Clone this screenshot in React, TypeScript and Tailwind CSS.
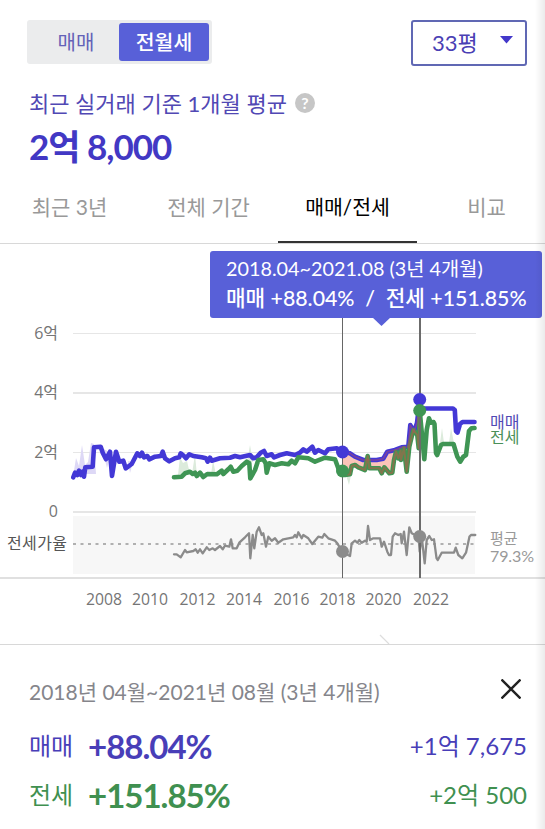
import clsx from "clsx";

type Point = [number, number];

const tabs = [
  { label: "최근 3년" },
  { label: "전체 기간" },
  { label: "매매/전세", active: true },
  { label: "비교" },
];

const gridLines = [
  { y: 333.5, label: "6억", thickness: 1 },
  { y: 393, label: "4억", thickness: 2 },
  { y: 452.5, label: "2억", thickness: 1 },
  { y: 512, label: "0", thickness: 2 },
];

const years = [
  { x: 104, label: "2008" },
  { x: 150, label: "2010" },
  { x: 197.5, label: "2012" },
  { x: 244, label: "2014" },
  { x: 291.5, label: "2016" },
  { x: 337.5, label: "2018" },
  { x: 383.5, label: "2020" },
  { x: 431, label: "2022" },
];

const saleBefore: Point[] = [
  [73.3, 477.3], [75, 472.7], [77.3, 475], [79, 470.7], [81, 475],
  [82.7, 471.7], [84, 476.7], [85.3, 467.3], [92.7, 466.7], [94, 447.3],
  [100.7, 446.7], [102.7, 452.7], [106, 459.3], [110, 451.7], [112, 476],
  [116, 451.7], [119.3, 461.7], [123.3, 460.7], [125.7, 468.3], [131.7, 464],
  [137.3, 453.3], [140, 456], [142, 452.7], [144, 457.3], [147.3, 456],
  [149.3, 459.3], [155, 456.7], [161, 456], [162.7, 451.7], [165, 458.3],
  [169.3, 461.3], [175, 458.3], [179.3, 457.3], [180.7, 453.3], [184, 456],
  [186, 458.3], [189.3, 454.3], [193.3, 456], [201.7, 457.3], [206, 458.3],
  [207.7, 461.7], [210, 457.7], [211.7, 460.7], [220, 458.3], [230, 457.7],
  [235, 456], [240, 457.3], [250, 455], [253.3, 458.3], [256.7, 457.3],
  [260.7, 452.7], [264, 451], [266.7, 456], [271.7, 454.3], [274, 457.3],
  [280, 455], [286.7, 453.3], [295, 455], [300, 452.7], [303.3, 449.3],
  [306.7, 451.7], [312.3, 446.7], [315, 452.7], [318.3, 450], [325, 453.3],
  [328.3, 449.3], [336.7, 448.3],
];

const saleRange: Point[] = [
  [342.5, 452], [350, 453.3], [355, 456.7], [363.3, 460], [376.7, 460],
  [383.3, 458.7], [387.3, 451.7], [395, 450], [401.7, 447.3], [408.3, 446.7],
  [410.3, 425], [414, 431.7], [417, 423], [419.7, 400],
];

const saleAfter: Point[] = [
  [420.7, 408.5], [453, 408.5], [454.8, 410], [456, 431], [457.5, 432.5],
  [460, 424], [462.5, 422], [474.5, 422],
];

const rentBefore: Point[] = [
  [174, 477.3], [181.7, 476.7], [185, 473.3], [190, 471.7], [192.7, 474],
  [195, 472.7], [196.7, 476], [200, 472.7], [203.3, 477], [207.3, 474],
  [216.7, 474.3], [221.7, 470.7], [223.3, 474], [228.3, 469.3], [230.7, 466.7],
  [233.3, 471.7], [237.3, 470.7], [241.7, 466], [246.7, 461.7], [249.3, 463.3],
  [250.3, 478.5], [255, 470], [258.3, 460], [263.3, 459.3], [265.7, 463.3],
  [266.7, 472.7], [269.3, 463.3], [275, 465], [281.7, 463.3], [288.3, 464.3],
  [291.7, 460.7], [295, 463.3], [298.3, 457.3], [308.3, 458.3], [315, 461.7],
  [325, 457.7], [335, 459.3], [338.3, 468.3],
];

const rentRange: Point[] = [
  [342.5, 470.7], [345, 475], [350, 474.3], [351.7, 466], [355, 465],
  [358.3, 467.3], [365, 470], [367.7, 456], [369.3, 468.3], [379.3, 468.3],
  [381.7, 473.3], [384.3, 467.3], [389.3, 473.3], [392.3, 472.7], [394, 460],
  [396, 451.7], [398.3, 458.3], [400.7, 450.7], [401, 460], [404, 448.3],
  [406.7, 471.7], [409.3, 446.7], [413.3, 430], [417.3, 435], [418.7, 448.3],
  [419.7, 410.7],
];

const rentAfter: Point[] = [
  [424.3, 459.3], [426.7, 430], [429, 418.3], [430.7, 422.7], [433.5, 422],
  [434.5, 424], [436, 453], [437.2, 455], [441, 445], [443, 444],
  [453.5, 444], [457.3, 456.7], [460.2, 461.7], [463.3, 456.7], [466, 455],
  [469, 431], [471.5, 428.3], [474.5, 428],
];

const ratio: Point[] = [
  [174, 554.3], [176.7, 554.3], [180.7, 557.3], [185, 550], [186.7, 552.3],
  [193.3, 551], [195.7, 549.3], [197.7, 552.7], [200, 549.3], [202.7, 553.3],
  [206.7, 547.3], [209.3, 550], [212.7, 548.3], [215, 550], [220, 546],
  [222.7, 549.3], [225, 545.7], [229.3, 546.7], [231, 539.3], [232.7, 548.3],
  [236.7, 548.3], [239.3, 542.7], [245, 537.3], [249, 533.3], [250.3, 558.3],
  [252.7, 535], [254.3, 548.3], [256.7, 531.7], [259, 527.3], [261.7, 535],
  [263.3, 533.3], [266, 546.7], [268.3, 536.7], [271.7, 540.7], [275, 538.3],
  [278.3, 542.7], [283.3, 539.3], [293.3, 537.3], [295, 535], [296.7, 537.3],
  [298.3, 532.3], [301.7, 538.3], [303.3, 535], [308.3, 538.3], [312.3, 544],
  [318.3, 536.7], [322.3, 537.7], [324.3, 534], [328.3, 538.3], [335, 540.7],
  [337.3, 543.3], [342.3, 551.7], [348, 555], [350, 556], [351.7, 543.3],
  [355, 540.7], [357.3, 542.7], [359.3, 540], [361.7, 542.7], [365, 540.7],
  [366.7, 541.7], [368, 526], [370, 540], [373.3, 538.3], [380, 538.3],
  [381.7, 546.7], [384, 541.7], [387.3, 551.7], [389, 555], [391, 555],
  [392.7, 536.7], [395, 533.3], [398.3, 535], [400.7, 534], [401.7, 543.3],
  [404, 531.7], [406.7, 555], [409.3, 527.3], [411.7, 533.3], [415, 535],
  [418.3, 533.3], [419.7, 551.7], [421.7, 536.7], [424.7, 563.3], [426.7, 540],
  [429.3, 536], [431.7, 540], [434, 539.3], [436.5, 558], [437.8, 560],
  [441.7, 552.7], [454, 552.7], [455.7, 547.7], [458.3, 555], [462.3, 558.3],
  [466, 552.7], [469.5, 536.5], [471, 535], [475.3, 535],
];

const toPoints = (points: Point[]) => points.map((p) => p.join(",")).join(" ");

const Header = () => (
  <div className="flex h-[66px] items-start justify-between pl-[27px] pr-[18px] pt-5">
    <div className="flex h-11 w-[185px] rounded-[3px] bg-[#ebeced] p-[3px] text-[20.5px]">
      <button className="flex-1 pl-[3px] text-[20px] text-[#6462b8]">매매</button>
      <button className="w-[90px] rounded-[3px] bg-[#5860d8] font-medium text-white">
        전월세
      </button>
    </div>
    <button className="flex h-[46px] w-[116px] items-center justify-between rounded-[3px] border-2 border-[#6068b4] pb-0.5 pl-[19px] pr-[12px] text-[22px] text-[#4a40b4]">
      33평
      <svg width="13" height="8" viewBox="0 0 13 8" className="mb-1">
        <path d="M0 0h13L6.5 7.5z" fill="#4338ca" />
      </svg>
    </button>
  </div>
);

const Summary = () => (
  <div className="px-[29px] pt-[19px]">
    <div className="flex h-9 items-center gap-2 text-[22px] text-[#5148b4]">
      <span className="whitespace-nowrap">최근 실거래 기준 1개월 평균</span>
      <span className="flex size-5 items-center justify-center rounded-full bg-[#c6c6c6] text-base font-bold text-white">
        ?
      </span>
    </div>
    <div className="flex h-[50px] items-center text-[35px] font-bold tracking-[-1px] text-[#4238c4]">
      2억 8,000
    </div>
  </div>
);

const Tabs = () => (
  <div className="flex h-[73px] overflow-hidden border-b border-[#d8d8d8]">
    {tabs.map(({ label, active }) => (
      <button
        key={label}
        className={clsx(
          "h-[72px] w-[139px] shrink-0",
          active
            ? "border-b-2 border-[#333] pt-0.5 text-[20.5px] text-black"
            : "text-[21px] text-[#999]"
        )}
      >
        {label}
      </button>
    ))}
  </div>
);

const Tooltip = () => (
  <div className="absolute left-[210px] top-[7px] flex h-[67px] w-[332px] flex-col rounded-[3px] bg-[#5860d8] pl-4 pt-1 text-white">
    <div className="h-[27px] whitespace-nowrap text-[19.8px] leading-[27px]">
      2018.04~2021.08 (3년 4개월)
    </div>
    <div className="h-[32px] whitespace-pre text-[21.3px] font-medium leading-[32px]">
      매매 +88.04%{"  "}/{"  "}전세 +151.85%
    </div>
    <svg
      width="19"
      height="9"
      viewBox="0 0 19 9"
      className="absolute left-[162px] top-[66px]"
    >
      <path d="M0 0h19L9.5 9z" fill="#5860d8" />
    </svg>
  </div>
);

const Chart = () => (
  <svg width="545" height="400" viewBox="0 244 545 400" className="block">
    {gridLines.map(({ y, thickness }) => (
      <line key={y} x1="73" x2="476" y1={y} y2={y} stroke="#e6e6e6" strokeWidth={thickness} />
    ))}
    <rect x="73" y="516" width="402" height="58" fill="#f7f7f7" />
    <line x1="0" x2="545" y1="578" y2="578" stroke="#d6d6d6" strokeWidth="1.5" />
    <line x1="73" x2="478" y1="544" y2="544" stroke="#b0b0b0" strokeWidth="2" strokeDasharray="3 4.5" />

    {/* faint spread of individual deals */}
    <path d="M73 477l3-19 3 8 3-21 3 20 3-3 3-19 3 1 2 30H73zM102 448l5 20 4-15zM128 461l2 12 3-11z" fill="#ddd8f6" />
    <path d="M178 475l2-18 3 6 4-2 3 13zM192 474l3-20 2 22zM211 475l2-15 3 15zM247 462l3-17 3 17zM346 475l3 10 2-10zM440 443l2-15 2 15zM449 443l2-15 3 15z" fill="#dcebdc" />

    <polygon points={toPoints([...saleRange, ...[...rentRange].reverse()])} fill="#fbc4b8" />
    <g fill="none" strokeLinejoin="round" strokeLinecap="round">
      <polyline points={toPoints([...saleBefore, ...saleRange, ...saleAfter])} stroke="#4338d6" strokeWidth="4.6" />
      <polyline points={toPoints([...rentBefore, ...rentRange, ...rentAfter])} stroke="#3f9554" strokeWidth="4.6" />
      <polyline points={toPoints(saleRange)} stroke="#a04878" strokeWidth="1.5" opacity="0.6" />
      <polyline points={toPoints(rentRange)} stroke="#a06848" strokeWidth="2" opacity="0.7" />
      <polyline points={toPoints(ratio)} stroke="#8b8b8b" strokeWidth="2.3" />
    </g>

    <line x1="342.5" x2="342.5" y1="318" y2="578" stroke="#666" />
    <line x1="420" x2="420" y1="318" y2="578" stroke="#6b6b6b" strokeWidth="2" />
    <circle cx="342.5" cy="452" r="6.5" fill="#4338d6" />
    <circle cx="342.5" cy="471" r="6.5" fill="#3f9554" />
    <circle cx="342.5" cy="551.5" r="6.5" fill="#8b8b8b" />
    <circle cx="419.7" cy="399.5" r="6.5" fill="#4338d6" />
    <circle cx="419.7" cy="410.5" r="6.5" fill="#3f9554" />
    <circle cx="419.7" cy="536.5" r="6.5" fill="#8b8b8b" />

    <g
      fill="#757575"
      fontSize="16"
      className="font-['Open_Sans','Noto_Sans_CJK_KR',sans-serif]"
    >
      {gridLines.map(({ y, label }) => (
        <text key={label} x="58" y={Math.round(y) + 5} textAnchor="end">
          {label}
        </text>
      ))}
      {years.map(({ x, label }) => (
        <text key={label} x={x} y="605" textAnchor="middle" textLength="36" lengthAdjust="spacingAndGlyphs">
          {label}
        </text>
      ))}
    </g>
    <text x="7" y="549" fontSize="16" fill="#555" textLength="60">전세가율</text>
    <g fontSize="16">
      <text x="490" y="428" fill="#5148b4">매매</text>
      <text x="490" y="443" fill="#4a9058">전세</text>
      <text x="490" y="544" fontSize="15" fill="#999">평균</text>
      <text x="490" y="562" fill="#999" textLength="44">79.3%</text>
    </g>
    <path d="M380 635l9 9" fill="none" stroke="#ddd" strokeWidth="1.2" />
  </svg>
);

const Detail = () => (
  <div className="flex flex-col border-t border-[#d8d8d8] pl-[29px] pr-[18px] pt-[25px]">
    <div className="flex h-11 items-center justify-between text-[21px] text-[#85858b]">
      <span className="whitespace-nowrap">2018년 04월~2021년 08월 (3년 4개월)</span>
      <svg width="20" height="20" viewBox="0 0 20 20" className="mb-1.5 mr-1.5">
        <path d="M0.5 0.5l19 19M19.5 0.5l-19 19" stroke="#222" strokeWidth="2.4" />
      </svg>
    </div>
    <div className="flex h-[54px] items-center pt-2.5 text-2xl text-[#483eb8]">
      <span className="w-[59px]">매매</span>
      <span className="text-[33px] font-bold tracking-[-1px]">+88.04%</span>
      <span className="ml-auto">+1억 7,675</span>
    </div>
    <div className="flex h-[49px] items-center pt-1 text-2xl text-[#3f9050]">
      <span className="w-[59px]">전세</span>
      <span className="text-[33px] font-bold tracking-[-1px]">+151.85%</span>
      <span className="ml-auto">+2억 500</span>
    </div>
  </div>
);

const App = () => {
  return (
    <div className="relative h-[829px] w-[545px] overflow-hidden bg-white font-['Lato','Noto_Sans_CJK_KR',sans-serif]">
      <Header />
      <Summary />
      <Tabs />
      <div className="relative">
        <Chart />
        <Tooltip />
      </div>
      <Detail />
      <div className="absolute inset-y-0 right-0 w-2.5 bg-gradient-to-r from-transparent to-black/8" />
    </div>
  );
};

export default App;
